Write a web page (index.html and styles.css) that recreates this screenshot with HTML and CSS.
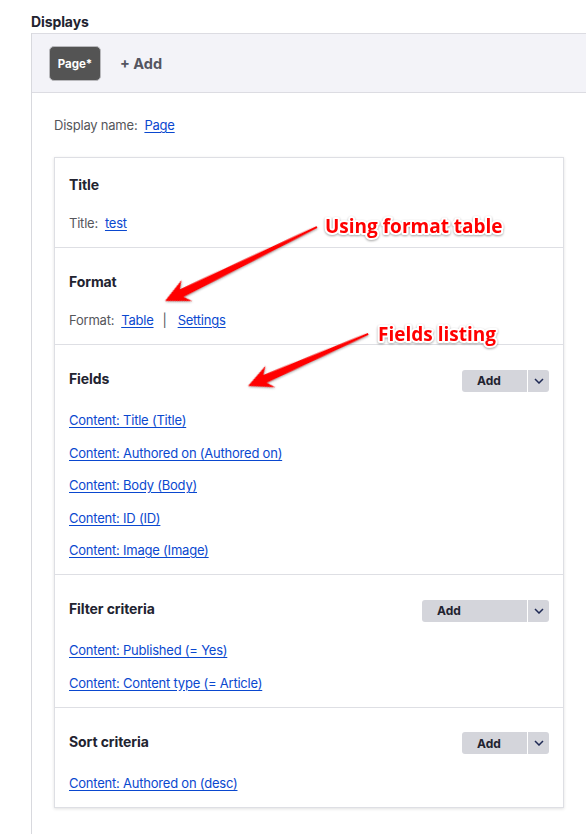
FILE: index.html
```html
<!DOCTYPE html>
<html lang="en">
<head>
<meta charset="utf-8">
<title>Displays</title>
<link rel="stylesheet" href="styles.css">
</head>
<body>
<div class="page">
  <h2 class="label">Displays</h2>
  <div class="displays">
    <div class="tabs">
      <span class="tab-active">Page*</span>
      <span class="tab-add">+ Add</span>
    </div>
    <div class="display-body">
      <div class="display-name"><span class="muted">Display name:</span><a href="#">Page</a></div>
      <div class="card">
        <section class="sec first">
          <div class="sec-head"><h3>Title</h3></div>
          <div class="sec-line"><span class="muted">Title:</span><a href="#">test</a></div>
        </section>
        <section class="sec">
          <div class="sec-head"><h3>Format</h3></div>
          <div class="sec-line"><span class="muted">Format:</span><a href="#">Table</a><span class="sep">|</span><a href="#">Settings</a></div>
        </section>
        <section class="sec">
          <div class="sec-head"><h3>Fields</h3>
            <div class="split"><span class="split-main">Add</span><span class="split-toggle"><svg width="10" height="6" viewBox="0 0 10 6"><path d="M1 1l4 4 4-4" fill="none" stroke="#1f2a55" stroke-width="1.5"/></svg></span></div>
          </div>
          <ul class="links">
            <li><a href="#">Content: Title (Title)</a></li>
            <li><a href="#">Content: Authored on (Authored on)</a></li>
            <li><a href="#">Content: Body (Body)</a></li>
            <li><a href="#">Content: ID (ID)</a></li>
            <li><a href="#">Content: Image (Image)</a></li>
          </ul>
        </section>
        <section class="sec">
          <div class="sec-head"><h3>Filter criteria</h3>
            <div class="split wide"><span class="split-main">Add</span><span class="split-toggle"><svg width="10" height="6" viewBox="0 0 10 6"><path d="M1 1l4 4 4-4" fill="none" stroke="#1f2a55" stroke-width="1.5"/></svg></span></div>
          </div>
          <ul class="links">
            <li><a href="#">Content: Published (= Yes)</a></li>
            <li><a href="#">Content: Content type (= Article)</a></li>
          </ul>
        </section>
        <section class="sec">
          <div class="sec-head"><h3>Sort criteria</h3>
            <div class="split"><span class="split-main">Add</span><span class="split-toggle"><svg width="10" height="6" viewBox="0 0 10 6"><path d="M1 1l4 4 4-4" fill="none" stroke="#1f2a55" stroke-width="1.5"/></svg></span></div>
          </div>
          <ul class="links">
            <li><a href="#">Content: Authored on (desc)</a></li>
          </ul>
        </section>
      </div>
    </div>
  </div>
</div>
<svg class="annot" width="586" height="834" viewBox="0 0 586 834">
  <g class="arrow" transform="translate(165 301) rotate(-25.96)">
    <polygon points="0,0 24,-11.5 18.5,-4 169,-0.9 169,0.9 18.5,4.5 24.5,12"/>
  </g>
  <g class="arrow" transform="translate(248 386) rotate(-23.43)">
    <polygon points="0,0 24,-11.5 18.5,-4 131,-0.9 131,0.9 18.5,4.5 24.5,12"/>
  </g>
  <text class="note" x="325" y="233">Using format table</text>
  <text class="note" x="378" y="341">Fields listing</text>
</svg>
</body>
</html>
```

FILE: styles.css
```css
html, body {
  margin: 0;
  padding: 0;
  background: #fff;
}
body {
  font-family: Inter, "Liberation Sans", Arial, sans-serif;
  color: #222330;
  position: relative;
  width: 586px;
  height: 834px;
  overflow: hidden;
}
.page {
  padding: 13px 0 0 31px;
}
.label {
  margin: 0 0 2px;
  font-size: 14px;
  line-height: 18px;
  font-weight: 700;
  color: #222330;
  letter-spacing: -0.1px;
}
.displays {
  border-left: 1px solid #d8d9de;
  min-height: 820px;
}
.tabs {
  background: #f3f3f8;
  border-top: 1px solid #dcdce2;
  border-bottom: 1px solid #dcdce2;
  padding: 12px 17px 11px;
  display: flex;
  align-items: center;
  gap: 19px;
}
.tab-active {
  box-sizing: border-box;
  width: 52px;
  height: 35px;
  border-radius: 5px;
  background: #545454;
  border: 1px solid #b9b9bd;
  color: #fff;
  font-size: 11.5px;
  font-weight: 700;
  display: flex;
  align-items: center;
  justify-content: center;
}
.tab-add {
  font-size: 14.5px;
  font-weight: 700;
  color: #545560;
  margin-top: -1px;
}
.display-body {
  padding: 22px 22px 0;
}
.display-name {
  font-size: 13px;
  line-height: 20px;
  letter-spacing: -0.22px;
  display: flex;
  gap: 7px;
}
.muted {
  color: #55565b;
}
a {
  color: #0a48cf;
  text-decoration: underline;
  text-underline-offset: 2px;
}
.card {
  margin-top: 22px;
  border: 1px solid #dedfe4;
  box-shadow: 0 1px 3px rgba(0, 0, 0, 0.12);
  background: #fff;
}
.sec {
  padding: 24px 14px 14px;
  border-top: 1px solid #dedfe4;
}
.sec.first {
  border-top: 0;
  padding-top: 17px;
}
.sec-head {
  display: flex;
  align-items: center;
  justify-content: space-between;
  height: 20px;
}
.sec-head h3 {
  margin: 0;
  font-size: 14px;
  line-height: 20px;
  font-weight: 700;
  color: #222330;
  letter-spacing: -0.1px;
}
.sec-line {
  margin-top: 18px;
  font-size: 13px;
  line-height: 20px;
  letter-spacing: -0.22px;
  display: flex;
  gap: 7px;
}
.sep {
  color: #55565b;
  margin: 0 4px 0 2px;
}
.links {
  list-style: none;
  margin: 21px 0 0;
  padding: 0;
  display: flex;
  flex-direction: column;
  gap: 12.5px;
  font-size: 13px;
  line-height: 20px;
  letter-spacing: -0.22px;
}
.split {
  display: flex;
  height: 22px;
  width: 87px;
  margin-top: 3px;
  border-radius: 3px;
  overflow: hidden;
  background: #d4d5db;
}
.split.wide {
  width: 127px;
}
.split-main {
  flex: 1;
  display: flex;
  align-items: center;
  padding-left: 15px;
  font-size: 12px;
  font-weight: 700;
  color: #222330;
  border-right: 1px solid #fff;
}
.split-toggle {
  width: 21px;
  display: flex;
  align-items: center;
  justify-content: center;
}
.annot {
  position: absolute;
  left: 0;
  top: 0;
  pointer-events: none;
}
.arrow polygon {
  fill: #ff0000;
  filter: drop-shadow(0 1.5px 1px rgba(0, 0, 0, 0.35));
}
.note {
  font-family: "Open Sans", "DejaVu Sans", sans-serif;
  font-weight: 700;
  font-size: 19px;
  fill: #ff0000;
  stroke: #fff;
  stroke-width: 4px;
  stroke-linejoin: round;
  paint-order: stroke;
  filter: drop-shadow(0 1px 1px rgba(0, 0, 0, 0.35));
}
```
